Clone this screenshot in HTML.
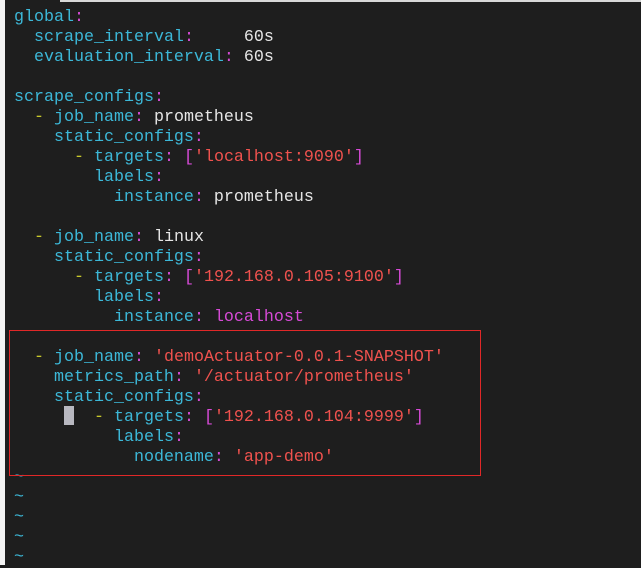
<!DOCTYPE html>
<html><head><style>
html,body{margin:0;padding:0;}
body{width:641px;height:565px;background:#1e1e1e;position:relative;overflow:hidden;}
.l{position:absolute;left:0;top:0;width:5px;height:565px;background:#f4f4f4;}
.t{position:absolute;left:60px;top:0;width:581px;height:2px;background:#d8d8d8;}
pre{position:absolute;left:14px;top:8px;margin:0;font-family:"Liberation Mono",monospace;font-size:16.67px;line-height:20px;color:#e6e6e6;}
.k{color:#3cb8d8}.c{color:#d64ad6}.s{color:#f0524e}.d{color:#c8c82a}.b{color:#d64ad6}
.box{position:absolute;left:9px;top:330px;width:472px;height:146px;border:1px solid #e02828;box-sizing:border-box;}
.cur{position:absolute;left:64px;top:406px;width:10px;height:19px;background:#b8b8c0;}
</style></head><body>
<div class="l"></div><div class="t"></div>
<pre><span class="k">global</span><span class="c">:</span>
  <span class="k">scrape_interval</span><span class="c">:</span>     60s
  <span class="k">evaluation_interval</span><span class="c">:</span> 60s

<span class="k">scrape_configs</span><span class="c">:</span>
  <span class="d">-</span> <span class="k">job_name</span><span class="c">:</span> prometheus
    <span class="k">static_configs</span><span class="c">:</span>
      <span class="d">-</span> <span class="k">targets</span><span class="c">:</span> <span class="b">[</span><span class="s">'localhost:9090'</span><span class="b">]</span>
        <span class="k">labels</span><span class="c">:</span>
          <span class="k">instance</span><span class="c">:</span> prometheus

  <span class="d">-</span> <span class="k">job_name</span><span class="c">:</span> linux
    <span class="k">static_configs</span><span class="c">:</span>
      <span class="d">-</span> <span class="k">targets</span><span class="c">:</span> <span class="b">[</span><span class="s">'192.168.0.105:9100'</span><span class="b">]</span>
        <span class="k">labels</span><span class="c">:</span>
          <span class="k">instance</span><span class="c">:</span> <span class="c">localhost</span>

  <span class="d">-</span> <span class="k">job_name</span><span class="c">:</span> <span class="s">'demoActuator-0.0.1-SNAPSHOT'</span>
    <span class="k">metrics_path</span><span class="c">:</span> <span class="s">'/actuator/prometheus'</span>
    <span class="k">static_configs</span><span class="c">:</span>
        <span class="d">-</span> <span class="k">targets</span><span class="c">:</span> <span class="b">[</span><span class="s">'192.168.0.104:9999'</span><span class="b">]</span>
          <span class="k">labels</span><span class="c">:</span>
            <span class="k">nodename</span><span class="c">:</span> <span class="s">'app-demo'</span>
<span class="k">~</span>
<span class="k">~</span>
<span class="k">~</span>
<span class="k">~</span>
<span class="k">~</span></pre>
<div class="box"></div><div class="cur"></div>
</body></html>
